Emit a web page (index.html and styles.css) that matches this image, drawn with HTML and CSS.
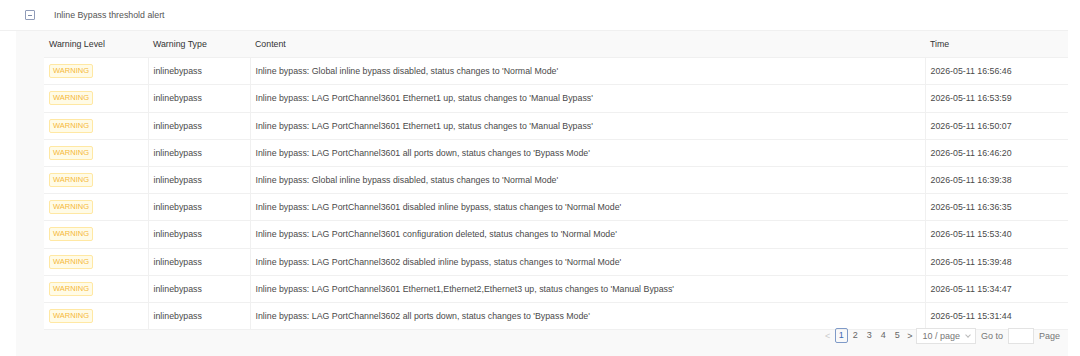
FILE: index.html
```html
<!DOCTYPE html>
<html>
<head>
    <title>Inline Bypass Alerts</title>
    <link rel="stylesheet" href="styles.css">
</head>
<body>
    <div class="group-row">
        <span class="expand-icon"></span>
        <span class="group-title">Inline Bypass threshold alert</span>
    </div>

    <div class="expanded">
        <table class="alerts">
            <thead>
                <tr>
                    <th class="col-level">Warning Level</th>
                    <th class="col-type">Warning Type</th>
                    <th class="col-content">Content</th>
                    <th class="col-time">Time</th>
                </tr>
            </thead>
            <tbody>
                <tr>
                    <td><span class="tag">WARNING</span></td>
                    <td>inlinebypass</td>
                    <td>Inline bypass: Global inline bypass disabled, status changes to 'Normal Mode'</td>
                    <td>2026-05-11 16:56:46</td>
                </tr>
                <tr>
                    <td><span class="tag">WARNING</span></td>
                    <td>inlinebypass</td>
                    <td>Inline bypass: LAG PortChannel3601 Ethernet1 up, status changes to 'Manual Bypass'</td>
                    <td>2026-05-11 16:53:59</td>
                </tr>
                <tr>
                    <td><span class="tag">WARNING</span></td>
                    <td>inlinebypass</td>
                    <td>Inline bypass: LAG PortChannel3601 Ethernet1 up, status changes to 'Manual Bypass'</td>
                    <td>2026-05-11 16:50:07</td>
                </tr>
                <tr>
                    <td><span class="tag">WARNING</span></td>
                    <td>inlinebypass</td>
                    <td>Inline bypass: LAG PortChannel3601 all ports down, status changes to 'Bypass Mode'</td>
                    <td>2026-05-11 16:46:20</td>
                </tr>
                <tr>
                    <td><span class="tag">WARNING</span></td>
                    <td>inlinebypass</td>
                    <td>Inline bypass: Global inline bypass disabled, status changes to 'Normal Mode'</td>
                    <td>2026-05-11 16:39:38</td>
                </tr>
                <tr>
                    <td><span class="tag">WARNING</span></td>
                    <td>inlinebypass</td>
                    <td>Inline bypass: LAG PortChannel3601 disabled inline bypass, status changes to 'Normal Mode'</td>
                    <td>2026-05-11 16:36:35</td>
                </tr>
                <tr>
                    <td><span class="tag">WARNING</span></td>
                    <td>inlinebypass</td>
                    <td>Inline bypass: LAG PortChannel3601 configuration deleted, status changes to 'Normal Mode'</td>
                    <td>2026-05-11 15:53:40</td>
                </tr>
                <tr>
                    <td><span class="tag">WARNING</span></td>
                    <td>inlinebypass</td>
                    <td>Inline bypass: LAG PortChannel3602 disabled inline bypass, status changes to 'Normal Mode'</td>
                    <td>2026-05-11 15:39:48</td>
                </tr>
                <tr>
                    <td><span class="tag">WARNING</span></td>
                    <td>inlinebypass</td>
                    <td>Inline bypass: LAG PortChannel3601 Ethernet1,Ethernet2,Ethernet3 up, status changes to 'Manual Bypass'</td>
                    <td>2026-05-11 15:34:47</td>
                </tr>
                <tr>
                    <td><span class="tag">WARNING</span></td>
                    <td>inlinebypass</td>
                    <td>Inline bypass: LAG PortChannel3602 all ports down, status changes to 'Bypass Mode'</td>
                    <td>2026-05-11 15:31:44</td>
                </tr>
            </tbody>
        </table>

        <div class="pager">
            <span class="pager-arrow prev">&lt;</span>
            <span class="pager-item active">1</span>
            <span class="pager-item">2</span>
            <span class="pager-item">3</span>
            <span class="pager-item">4</span>
            <span class="pager-item">5</span>
            <span class="pager-arrow next">&gt;</span>
            <span class="page-size">10 / page <span class="caret"></span></span>
            <span class="goto">Go to</span>
            <span class="goto-input"></span>
            <span class="goto">Page</span>
        </div>
    </div>
</body>
</html>
```

FILE: styles.css
```css
body {
    margin: 0;
    background-color: #fff;
    font-family: "Liberation Sans", Arial, sans-serif;
    font-size: 8.8px;
    color: #4a4a4a;
}

.group-row {
    display: flex;
    align-items: center;
    height: 31px;
    padding-left: 25px;
    border-bottom: 1px solid #f0f0f0;
    box-sizing: border-box;
    width: 1068px;
}

.expand-icon {
    position: relative;
    width: 8px;
    height: 8px;
    border: 1px solid #8f9bb8;
    border-radius: 1px;
    margin-right: 19px;
}

.expand-icon::after {
    content: "";
    position: absolute;
    left: 2px;
    right: 2px;
    top: 3.5px;
    height: 1px;
    background-color: #7d8aa8;
}

.group-title {
    font-size: 8.8px;
    color: #555;
}

/* expanded panel */
.expanded {
    margin-left: 16px;
    width: 1052px;
    height: 325px;
    background-color: #f9f9f9;
    padding-left: 28px;
    box-sizing: border-box;
}

.alerts {
    width: 1024px;
    border-collapse: collapse;
    table-layout: fixed;
}

.alerts th,
.alerts td {
    height: 26.2px;
    padding: 0 0 0 5px;
    text-align: left;
    border-bottom: 1px solid #f0f0f0;
    white-space: nowrap;
    overflow: hidden;
}

.alerts th {
    background-color: #f9f9f9;
    font-weight: normal;
    color: #333;
}

.alerts td {
    background-color: #fff;
}

.alerts td + td {
    border-left: 1px solid #f0f0f0;
}

.col-level { width: 99px; }
.col-type { width: 97px; }
.col-content { width: 670px; }
.col-time { width: 138px; }

.tag {
    display: inline-block;
    height: 12px;
    line-height: 12px;
    padding: 0 3px;
    font-size: 7.5px;
    color: #f5b93a;
    background-color: #fffbe6;
    border: 1px solid #ffe8a3;
    border-radius: 2px;
}

/* pagination */
.pager {
    display: flex;
    justify-content: flex-end;
    align-items: center;
    height: 11px;
    padding-right: 8px;
    color: #666;
    font-size: 9px;
}

.pager-arrow {
    color: #666;
}

.pager-arrow.prev {
    color: #ccc;
    margin-right: 4px;
}

.pager-arrow.next {
    margin-left: 3px;
    margin-right: 4px;
}

.pager-item {
    min-width: 11px;
    height: 13px;
    line-height: 13px;
    margin: 0 0.5px;
    text-align: center;
    border: 1px solid transparent;
    border-radius: 2px;
}

.pager-item.active {
    border-color: #7f9ac8;
    color: #3d6bb3;
}

.page-size {
    display: flex;
    align-items: center;
    height: 14px;
    padding: 0 5px;
    border: 1px solid #e3e3e3;
    background-color: #fff;
    color: #777;
}

.caret {
    width: 3px;
    height: 3px;
    margin-left: 6px;
    margin-top: -2px;
    border-right: 1px solid #bbb;
    border-bottom: 1px solid #bbb;
    transform: rotate(45deg);
}

.goto {
    margin: 0 5px;
    color: #777;
}

.goto:last-child {
    margin-right: 0;
    margin-left: 5px;
}

.goto-input {
    width: 24px;
    height: 14px;
    border: 1px solid #e3e3e3;
    background-color: #fff;
}
```
